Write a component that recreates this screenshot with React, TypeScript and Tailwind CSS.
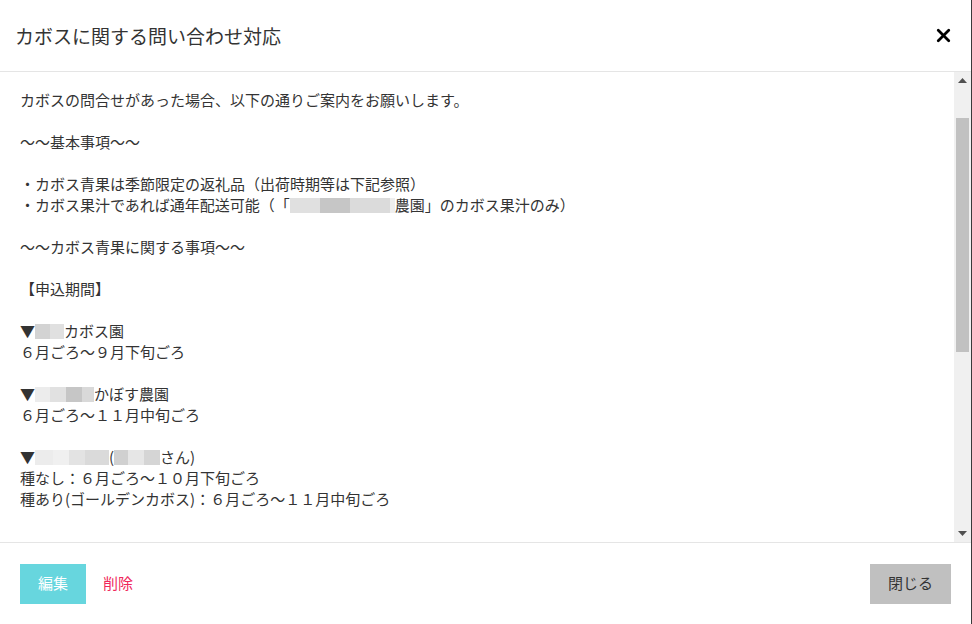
import { X } from "lucide-react";

const jp = { fontFamily: '"Meiryo", "Noto Sans CJK JP", "Noto Sans", sans-serif' };

// ぼかし部分（個人名など）
let Blur = ({ parts }: { parts: [number, string][] }) => {
  return (
    <span className="inline-flex align-[-2px] h-[15px]">
      {parts.map(([w, c], i) => (
        <span key={i} className="h-full inline-block" style={{ width: w, background: c }} />
      ))}
    </span>
  );
};

let App = () => {
  return (
    <div
      className="w-[972px] h-[624px] bg-white flex flex-col border-r border-[#3a3a3a] text-[#333] [text-spacing-trim:space-all]"
      style={jp}
    >
      <div className="h-[72px] shrink-0 flex items-center justify-between border-b border-[#e5e5e5] pl-[15px] pr-[17px]">
        <h1 className="text-[19px] text-[#333] leading-none">カボスに関する問い合わせ対応</h1>
        <X size={21} strokeWidth={3.2} className="text-black -mt-[1px]" />
      </div>

      <div className="h-[471px] shrink-0 flex border-b border-[#e5e5e5]">
        <div className="flex-1 overflow-hidden pl-5 pt-[17px] text-[15px] leading-[21px] text-[#333]">
          <p>カボスの問合せがあった場合、以下の通りご案内をお願いします。</p>
          <p>&nbsp;</p>
          <p>～～基本事項～～</p>
          <p>&nbsp;</p>
          <p>・カボス青果は季節限定の返礼品（出荷時期等は下記参照）</p>
          <p>
            ・カボス果汁であれば通年配送可能（「
            <Blur parts={[[30, "#e0e0e0"], [30, "#c6c6c6"], [40, "#dbdbdb"], [5, "#eeeeee"]]} />
            農園」のカボス果汁のみ）
          </p>
          <p>&nbsp;</p>
          <p>～～カボス青果に関する事項～～</p>
          <p>&nbsp;</p>
          <p>【申込期間】</p>
          <p>&nbsp;</p>
          <p>
            ▼<Blur parts={[[15, "#d3d3d3"], [14, "#e0e0e0"]]} />カボス園
          </p>
          <p>６月ごろ～９月下旬ごろ</p>
          <p>&nbsp;</p>
          <p>
            ▼<Blur parts={[[15, "#ececec"], [16, "#e1e1e1"], [16, "#c6c6c6"], [12, "#d9d9d9"]]} />かぼす農園
          </p>
          <p>６月ごろ～１１月中旬ごろ</p>
          <p>&nbsp;</p>
          <p>
            ▼<Blur parts={[[18, "#ececec"], [16, "#f0f0f0"], [16, "#e3e3e3"], [24, "#dadada"]]} />(
            <Blur parts={[[14, "#d0d0d0"], [16, "#e6e6e6"], [16, "#d5d5d5"]]} />さん)
          </p>
          <p>種なし：６月ごろ～１０月下旬ごろ</p>
          <p>種あり(ゴールデンカボス)：６月ごろ～１１月中旬ごろ</p>
        </div>

        {/* scrollbar */}
        <div className="w-[17px] shrink-0 bg-[#f0f0f0] flex flex-col">
          <div className="h-[17px] flex items-center justify-center">
            <svg width="9" height="5" viewBox="0 0 9 5"><path d="M4.5 0L9 5H0z" fill="#505050" /></svg>
          </div>
          <div className="flex-1 flex flex-col px-[2px]">
            <div className="h-[29px]" />
            <div className="h-[234px] bg-[#c1c1c1]" />
          </div>
          <div className="h-[17px] flex items-center justify-center">
            <svg width="9" height="5" viewBox="0 0 9 5"><path d="M0 0H9L4.5 5z" fill="#505050" /></svg>
          </div>
        </div>
      </div>

      <div className="flex-1 flex items-center justify-between px-5">
        <div className="flex items-center gap-[17px]">
          <button className="w-[66px] h-10 bg-[#67d6de] text-white text-[15px]">編集</button>
          <button className="text-[#f0285c] text-[15px]">削除</button>
        </div>
        <button className="w-[81px] h-10 bg-[#c0c0c0] text-[#333] text-[15px]">閉じる</button>
      </div>
    </div>
  );
};

export default App;
